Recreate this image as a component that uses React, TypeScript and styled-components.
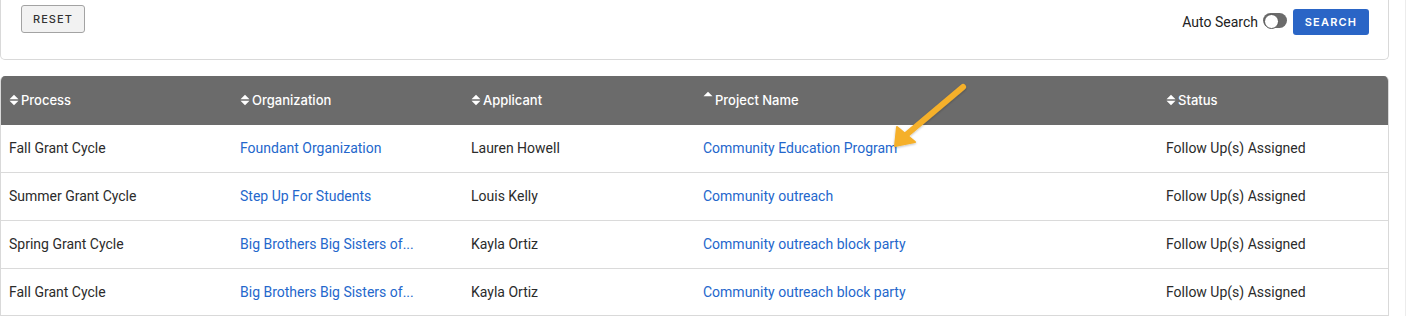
import React from "react";
import styled, { createGlobalStyle } from "styled-components";

const Global = createGlobalStyle`
  html, body { margin: 0; padding: 0; background: #fff; }
  body { font-family: Roboto, "Liberation Sans", Arial, sans-serif; overflow: hidden; }
  * { box-sizing: border-box; }
`;

const Page = styled.div`
  display: flex;
  width: 1406px;
  height: 316px;
  position: relative;
`;

const Main = styled.div`
  width: 1389px;
  display: flex;
  flex-direction: column;
  gap: 16px;
`;

const Gutter = styled.div`
  flex: 1;
  border-right: 1px solid #ececec;
`;

const FilterCard = styled.div`
  height: 60px;
  border: 1px solid #d9d9d9;
  border-top: none;
  border-radius: 0 0 5px 5px;
  display: flex;
  justify-content: space-between;
  align-items: flex-start;
  padding: 5px 19px 0 20px;
`;

const ResetButton = styled.button`
  width: 64px;
  height: 28px;
  background: #f2f2f2;
  border: 1px solid #a3a3a3;
  border-radius: 3px;
  font-family: Inter, "Open Sans", sans-serif;
  font-size: 11px;
  font-weight: 500;
  letter-spacing: 1.1px;
  color: #333;
  padding: 0;
`;

const RightGroup = styled.div`
  display: flex;
  align-items: center;
  margin-top: 4px;
`;

const AutoLabel = styled.span`
  font-size: 14px;
  color: #222;
  margin-right: 5px;
`;

const Toggle = styled.span`
  width: 24px;
  height: 15px;
  border-radius: 8px;
  background: #6b6b6b;
  position: relative;
  margin-right: 6px;
  margin-top: -3px;
  &::after {
    content: "";
    position: absolute;
    left: 1px;
    top: 1px;
    width: 13px;
    height: 13px;
    border-radius: 50%;
    background: #fff;
    border: 1.5px solid #555;
  }
`;

const SearchButton = styled.button`
  width: 76px;
  height: 26px;
  background: #2a65c6;
  border: none;
  border-radius: 3px;
  color: #fff;
  font-family: Inter, "Open Sans", sans-serif;
  font-size: 11px;
  font-weight: 600;
  letter-spacing: 1.2px;
  padding: 0;
`;

const Table = styled.div`
  border: 1px solid #d9d9d9;
  border-top: none;
  border-radius: 5px 5px 0 0;
  overflow: hidden;
`;

const Row = styled.div<{ $head?: boolean }>`
  display: grid;
  grid-template-columns: 231px 231px 232px 463px 1fr;
  height: ${(p) => (p.$head ? "49px" : "48px")};
  align-items: center;
  background: ${(p) => (p.$head ? "#6b6b6b" : "#fff")};
  border-bottom: ${(p) => (p.$head ? "none" : "1px solid #dadada")};
`;

const HeadCell = styled.div`
  display: flex;
  align-items: center;
  padding-left: 8px;
  color: #fff;
  font-family: Inter, "Open Sans", sans-serif;
  font-size: 13px;
  font-weight: 500;
  gap: 2px;
`;

const Cell = styled.div<{ $link?: boolean }>`
  padding-left: 8px;
  font-size: 14px;
  color: ${(p) => (p.$link ? "#2467cc" : "#2b2b2b")};
  white-space: nowrap;
`;

const SortIcon = ({ asc }: { asc?: boolean }) =>
  asc ? (
    <svg width="10" height="12" viewBox="0 0 10 12" style={{ marginTop: -7 }}>
      <path d="M0.5 5.2 L5 0.8 L9.5 5.2 Z" fill="#fff" />
    </svg>
  ) : (
    <svg width="10" height="12" viewBox="0 0 10 12">
      <path d="M0.5 5.2 L5 0.8 L9.5 5.2 Z" fill="#fff" />
      <path d="M0.5 6.8 L5 11.2 L9.5 6.8 Z" fill="#fff" />
    </svg>
  );

const Arrow = styled.svg`
  position: absolute;
  left: 880px;
  top: 76px;
  width: 100px;
  height: 80px;
  pointer-events: none;
  overflow: visible;
`;

const headers = [
  { t: "Process" },
  { t: "Organization" },
  { t: "Applicant" },
  { t: "Project Name", asc: true },
  { t: "Status" },
];

const rows = [
  ["Fall Grant Cycle", "Foundant Organization", "Lauren Howell", "Community Education Program", "Follow Up(s) Assigned"],
  ["Summer Grant Cycle", "Step Up For Students", "Louis Kelly", "Community outreach", "Follow Up(s) Assigned"],
  ["Spring Grant Cycle", "Big Brothers Big Sisters of...", "Kayla Ortiz", "Community outreach block party", "Follow Up(s) Assigned"],
  ["Fall Grant Cycle", "Big Brothers Big Sisters of...", "Kayla Ortiz", "Community outreach block party", "Follow Up(s) Assigned"],
];

export default function App() {
  return (
    <>
      <Global />
      <Page>
        <Main>
          <FilterCard>
            <ResetButton>RESET</ResetButton>
            <RightGroup>
              <AutoLabel>Auto Search</AutoLabel>
              <Toggle />
              <SearchButton>SEARCH</SearchButton>
            </RightGroup>
          </FilterCard>
          <Table>
            <Row $head>
              {headers.map((h) => (
                <HeadCell key={h.t}>
                  <SortIcon asc={h.asc} />
                  {h.t}
                </HeadCell>
              ))}
            </Row>
            {rows.map((r, i) => (
              <Row key={i}>
                {r.map((c, j) => (
                  <Cell key={j} $link={j === 1 || j === 3}>
                    {c}
                  </Cell>
                ))}
              </Row>
            ))}
          </Table>
        </Main>
        <Gutter />
        <Arrow viewBox="880 76 100 80">
          <defs>
            <filter id="sh" x="-20%" y="-20%" width="140%" height="140%">
              <feDropShadow dx="0" dy="1" stdDeviation="1" floodColor="#000" floodOpacity="0.25" />
            </filter>
          </defs>
          <g filter="url(#sh)" fill="#f5b02c" stroke="#f5b02c">
            <line x1="963" y1="87" x2="906" y2="135" strokeWidth="6" strokeLinecap="round" />
            <path d="M895 146 L897 127 L915 142 Z" strokeWidth="2" strokeLinejoin="round" />
          </g>
        </Arrow>
      </Page>
    </>
  );
}
